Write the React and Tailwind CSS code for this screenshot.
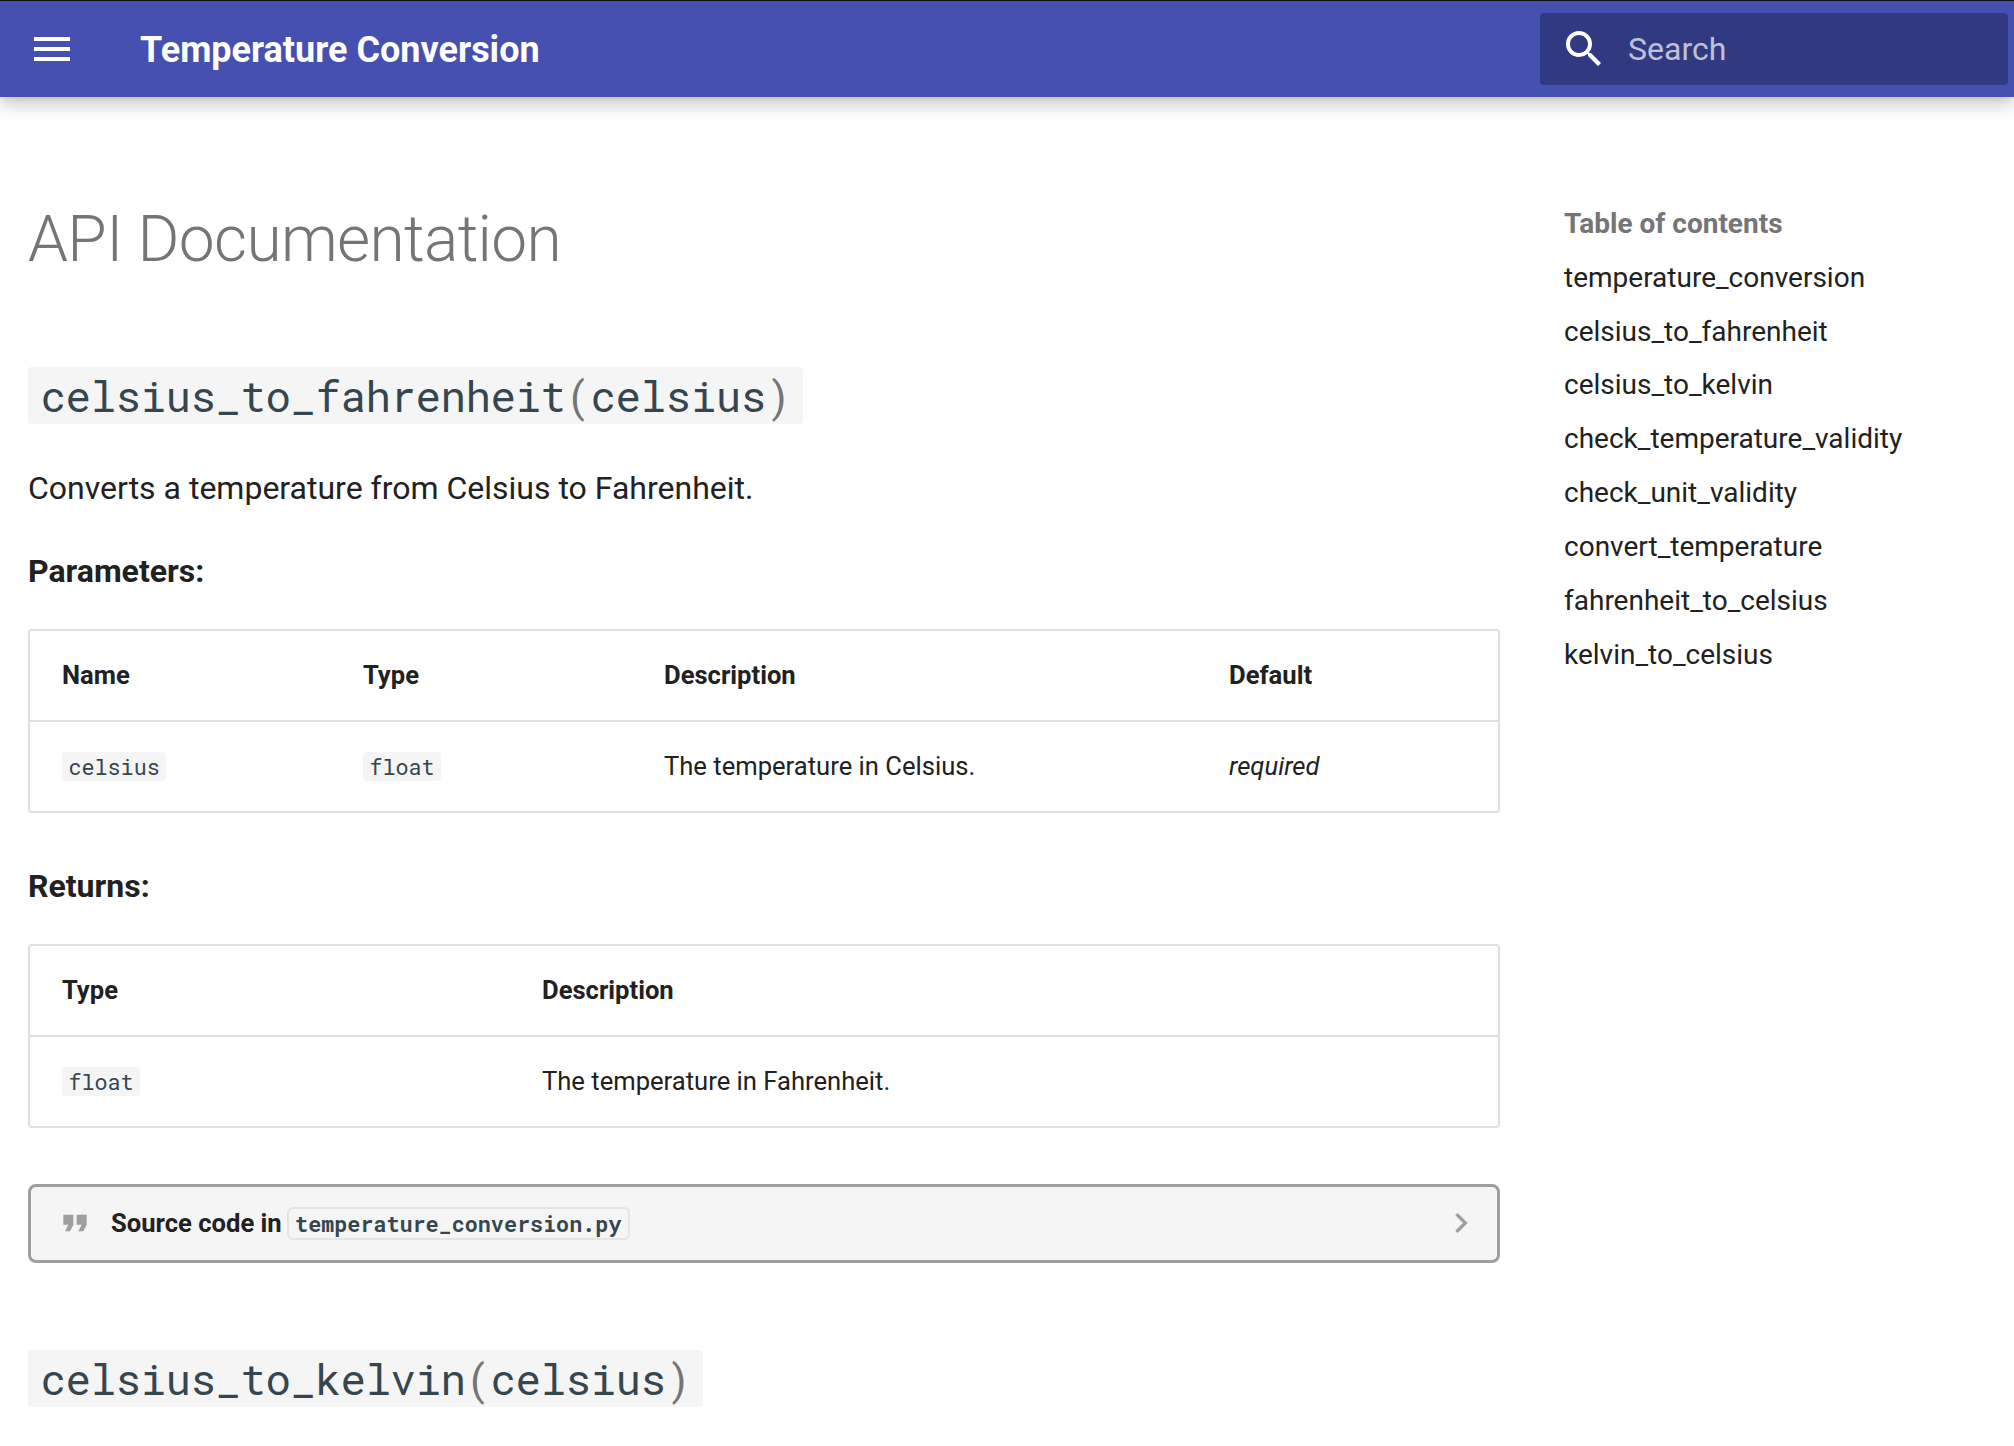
const MONO = "font-['Roboto_Mono','Liberation_Mono',monospace]";

const tocItems = [
  'temperature_conversion',
  'celsius_to_fahrenheit',
  'celsius_to_kelvin',
  'check_temperature_validity',
  'check_unit_validity',
  'convert_temperature',
  'fahrenheit_to_celsius',
  'kelvin_to_celsius',
];

function Icon({ d, className }) {
  return (
    <svg viewBox="0 0 24 24" fill="currentColor" className={className}>
      <path d={d} />
    </svg>
  );
}

function Header() {
  return (
    <header className="flex h-[97px] items-center border-t border-[#101014] bg-[#4550b0] pr-1.5 pl-7 text-white shadow-[0_0_8px_#0000001a,0_8px_16px_#00000033]">
      <Icon className="size-12 shrink-0" d="M3 6h18v2H3V6m0 5h18v2H3v-2m0 5h18v2H3v-2Z" />
      <span className="ml-16 pt-0.5 text-[36px] leading-[48px] font-bold">Temperature Conversion</span>
      <div className="ml-auto flex h-[72px] w-[468px] items-center rounded bg-[#313a80] pl-5">
        <Icon
          className="size-12 shrink-0"
          d="M9.5 3A6.5 6.5 0 0 1 16 9.5c0 1.61-.59 3.09-1.56 4.23l.27.27h.79l5 5-1.5 1.5-5-5v-.79l-.27-.27A6.516 6.516 0 0 1 9.5 16 6.5 6.5 0 0 1 3 9.5 6.5 6.5 0 0 1 9.5 3m0 2C7 5 5 7 5 9.5S7 14 9.5 14 14 12 14 9.5 12 5 9.5 5Z"
        />
        <span className="ml-5 text-[32px] leading-[48px] text-white/70">Search</span>
      </div>
    </header>
  );
}

function Signature({ name, arg, className }) {
  return (
    <h2 className={className + ' flex'}>
      <code
        className={
          MONO +
          ' block h-[57px] rounded bg-[#f5f5f5] px-[12.5px] text-[42.5px] leading-[58px] tracking-[-0.5px] text-[#36464e]'
        }
      >
        {name}
        <span className="text-[#757575]">(</span>
        {arg}
        <span className="text-[#757575]">)</span>
      </code>
    </h2>
  );
}

function InlineCode({ children }) {
  return (
    <code
      className={
        MONO +
        ' -mt-px block h-[29px] rounded bg-[#f5f5f5] px-[6.4px] text-[21.76px] leading-[30px] text-[#36464e]'
      }
    >
      {children}
    </code>
  );
}

function DataTable({ columns, head, row }) {
  return (
    <div className="mt-8 rounded border-2 border-[#e0e0e0] text-[25.6px] leading-[41px]">
      <div className={columns + ' grid h-[91px] items-center border-b-2 border-[#e0e0e0] font-bold'}>
        {head.map((h) => (
          <div key={h} className="px-8">{h}</div>
        ))}
      </div>
      <div className={columns + ' grid h-[89px] items-center'}>
        {row.map((cell, i) => (
          <div key={i} className="flex items-center px-8">{cell}</div>
        ))}
      </div>
    </div>
  );
}

function Source() {
  return (
    <div className="mt-14 flex h-[79px] items-center rounded-lg border-[3px] border-[#9e9e9e] bg-[#f5f5f5] pr-4 pl-6 text-[25.6px] leading-[41px] font-bold">
      <Icon className="-mt-px size-10 shrink-0 text-[#9e9e9e]" d="M14 17h3l2-4V7h-6v6h3M6 17h3l2-4V7H5v6h3l-2 4Z" />
      <span className="ml-4">Source code in</span>
      <code
        className={
          MONO +
          ' ml-[5px] block h-[33px] rounded-md border-2 border-[#e4e4e4] px-[6.4px] text-[21.76px] leading-[29px] text-[#36464e]'
        }
      >
        temperature_conversion.py
      </code>
      <Icon className="-mt-px ml-auto size-10 shrink-0 text-[#9e9e9e]" d="M8.59 16.58 13.17 12 8.59 7.41 10 6l6 6-6 6-1.41-1.42Z" />
    </div>
  );
}

export default function App() {
  return (
    <div className="h-[1446px] w-[2014px] overflow-hidden bg-white font-[Roboto,sans-serif] text-[#212121] antialiased">
      <Header />
      <div className="flex">
        <main className="ml-7 w-[1472px] shrink-0 pt-[101px]">
          <h1 className="text-[64px] leading-[83px] font-light tracking-[-0.01em] text-[#757575]">API Documentation</h1>
          <Signature className="mt-[86px]" name="celsius_to_fahrenheit" arg="celsius" />
          <p className="mt-[39px] text-[32px] leading-[51px]">Converts a temperature from Celsius to Fahrenheit.</p>
          <p className="mt-8 text-[32px] leading-[51px] font-bold">Parameters:</p>
          <DataTable
            columns="grid-cols-[301px_301px_565px_1fr]"
            head={['Name', 'Type', 'Description', 'Default']}
            row={[
              <InlineCode>celsius</InlineCode>,
              <InlineCode>float</InlineCode>,
              'The temperature in Celsius.',
              <em>required</em>,
            ]}
          />
          <p className="mt-12 text-[32px] leading-[51px] font-bold">Returns:</p>
          <DataTable
            columns="grid-cols-[480px_1fr]"
            head={['Type', 'Description']}
            row={[<InlineCode>float</InlineCode>, 'The temperature in Fahrenheit.']}
          />
          <Source />
          <Signature className="mt-[87px]" name="celsius_to_kelvin" arg="celsius" />
        </main>
        <nav className="ml-16 pt-[108.7px] text-[28px] leading-[36.4px]">
          <div className="font-bold text-[#757575]">Table of contents</div>
          <ul>
            {tocItems.map((item) => (
              <li key={item} className="mt-[17.5px]">{item}</li>
            ))}
          </ul>
        </nav>
      </div>
    </div>
  );
}
